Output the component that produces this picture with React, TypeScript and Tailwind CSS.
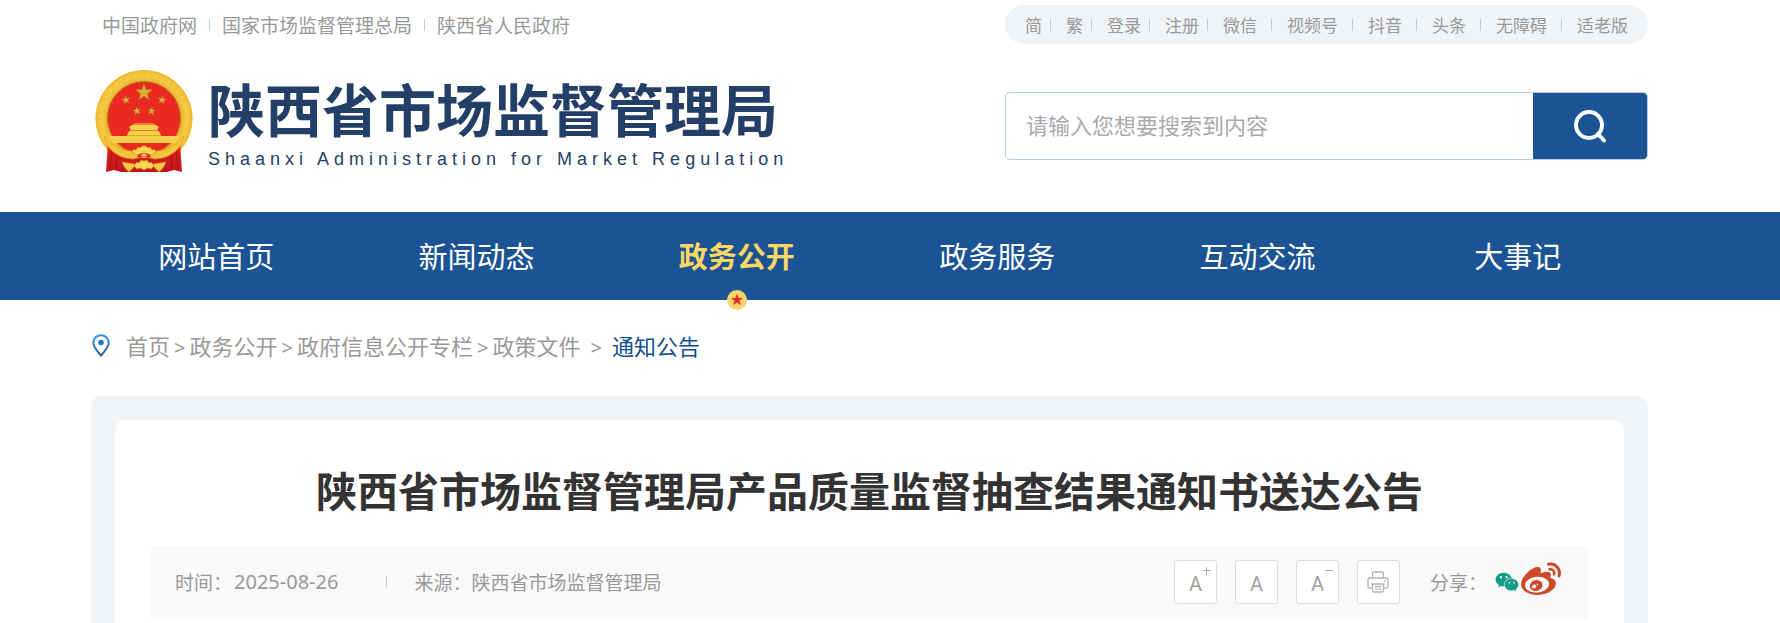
import { Fragment } from "react";
import { FaWeibo, FaWeixin } from "react-icons/fa";

const siteLinks = ["中国政府网", "国家市场监督管理总局", "陕西省人民政府"];

const compactTools = ["简", "繁", "登录", "注册"];
const wideTools = ["微信", "视频号", "抖音", "头条", "无障碍", "适老版"];

const navItems = [
  { label: "网站首页", active: false },
  { label: "新闻动态", active: false },
  { label: "政务公开", active: true },
  { label: "政务服务", active: false },
  { label: "互动交流", active: false },
  { label: "大事记", active: false },
];

const crumbs = ["首页", "政务公开", "政府信息公开专栏", "政策文件"];

const STAR = "0,-10 2.4,-3.2 9.5,-3.1 3.8,1.3 5.9,8.1 0,4 -5.9,8.1 -3.8,1.3 -9.5,-3.1 -2.4,-3.2";

function Emblem() {
  return (
    <svg viewBox="0 0 98 103" className="h-[103px] w-[98px] shrink-0" aria-hidden="true">
      <defs>
        <radialGradient id="gold" cx="50%" cy="50%" r="50%">
          <stop offset="0.74" stopColor="#dba028" />
          <stop offset="0.8" stopColor="#efc03a" />
          <stop offset="0.9" stopColor="#f7cd45" />
          <stop offset="1" stopColor="#eeb62c" />
        </radialGradient>
        <linearGradient id="drape" x1="0" x2="0" y1="0" y2="1">
          <stop offset="0" stopColor="#e0231e" />
          <stop offset="1" stopColor="#c3151a" />
        </linearGradient>
      </defs>
      <circle cx="49" cy="48.500" r="48.500" fill="url(#gold)" />
      <path d="M5 50a44 44 0 0 1 88-2" fill="none" stroke="#e5b035" strokeWidth="1" strokeDasharray="2 5" />
      <circle cx="49" cy="48" r="36.500" fill="#ea2a22" stroke="#b97a16" strokeWidth="0.800" />
      <path d="M13 73 30 84 49 88 68 84 85 73 87 102 79 100 72 102 26 102 19 100 11 102Z" fill="url(#drape)" />
      <path d="M17 80l-2 20M22 84l-1 16M81 80l2 20M76 84l1 16M29 90l-3 11M69 90l3 11" stroke="#a3121a" strokeWidth="1" />
      <path d="M9 66c6 9 15 14 28 15l12 1 12-1c13-1 22-6 28-15l-3 9c-7 10-17 14-27 14l-6-2h-8l-6 2c-10 0-20-4-27-14z" fill="#f4c33b" stroke="#cf9424" strokeWidth="0.500" />
      <path d="M37 82l2-3 2 1 2-3 2 1 2-2h4l2 2 2-1 2 3 2-1 2 3-5 3-2-1h-10l-2 1z" fill="#f9d552" stroke="#c98b1d" strokeWidth="0.500" />
      <path d="M42 87c1-3 4-4 7-4s6 1 7 4z" fill="#e0251f" />
      <path d="M46 86.500a3 3 0 0 1 6 0z" fill="#f8cc45" />
      <path d="M27 92l13 2-1 3-5 5c-3-3-6-6-7-10zM71 92l-13 2 1 3 5 5c3-3 6-6 7-10z" fill="#f6c93f" stroke="#c98b1d" strokeWidth="0.400" />
      <path d="M39 96l3-4 2 1 2-3 3 1 3-1 2 3 2-1 3 4-3 3-3-1-4 2-4-2-3 1z" fill="#f9d552" stroke="#c98b1d" strokeWidth="0.500" />
      <path d="M14 66h70l-4 7H18z" fill="#f8cf4a" />
      <path d="M32 66l2-5h30l2 5zM36 60l-2-3 3-2h24l3 2-2 3zM38 54.500l1-1h20l1 1z" fill="#f8cf4a" />
      <path d="M35 60.500h28M32 65.500h34" stroke="#dd9d28" strokeWidth="0.800" />
      <g fill="#d9ae38" stroke="#a86b14" strokeWidth="0.600">
        <polygon points={STAR} transform="translate(49 22.500) scale(.92)" />
        <polygon points={STAR} transform="translate(31 30) rotate(-12) scale(.44)" />
        <polygon points={STAR} transform="translate(67 30) rotate(12) scale(.44)" />
        <polygon points={STAR} transform="translate(42 41) rotate(-8) scale(.44)" />
        <polygon points={STAR} transform="translate(56.500 41) rotate(8) scale(.44)" />
      </g>
    </svg>
  );
}

function SearchIcon() {
  return (
    <svg viewBox="0 0 34 34" className="size-[34px]" fill="none" stroke="#fff" strokeWidth="4" strokeLinecap="round" aria-hidden="true">
      <circle cx="16" cy="16" r="13" />
      <path d="M25 25 31 31.500" />
    </svg>
  );
}

function PinIcon() {
  return (
    <svg viewBox="0 0 18 23" className="h-[23px] w-[18px]" aria-hidden="true">
      <defs>
        <linearGradient id="pin" x1="0" x2="0" y1="0" y2="1">
          <stop offset="0" stopColor="#3192e2" />
          <stop offset="1" stopColor="#2a5a98" />
        </linearGradient>
      </defs>
      <path d="M9 1.200C4.600 1.200 1.300 4.500 1.300 8.700 1.300 13 5.500 17.500 9 21.600 12.500 17.500 16.700 13 16.700 8.700 16.700 4.500 13.400 1.200 9 1.200Z" fill="none" stroke="url(#pin)" strokeWidth="2" strokeLinejoin="round" />
      <circle cx="9" cy="8.500" r="2.800" fill="#2579c8" />
    </svg>
  );
}

function PrinterIcon() {
  return (
    <svg viewBox="0 0 22 22" className="size-[22px]" fill="none" stroke="#b4b4b4" strokeWidth="1.300" strokeLinejoin="round" aria-hidden="true">
      <path d="M5.500 7V2.500q0-1.500 1.500-1.500h8q1.500 0 1.500 1.500V7" />
      <path d="M5.500 17H2.500Q1 17 1 15.500v-7Q1 7 2.500 7h17Q21 7 21 8.500v7q0 1.500-1.500 1.500h-3" />
      <path d="M4 13h14M5.500 13v6.500Q5.500 21 7 21h8q1.500 0 1.500-1.500V13M8 15.500h6M8 18h2M11.500 18H14M17 10h1.500" />
    </svg>
  );
}

function Divider({ className }: { className: string }) {
  return <span aria-hidden="true" className={`w-px shrink-0 bg-[#ccc] ${className}`} />;
}

function SizeButton({ label, mark }: { label: string; mark?: "plus" | "minus" }) {
  return (
    <button type="button" aria-label={label} className="relative flex h-11 w-[43px] items-center justify-center rounded-[3px] border border-[#ddd] bg-white pt-1 font-[Roboto,sans-serif] text-xl text-[#a0a0a0]">
      A
      {mark && (
        <svg viewBox="0 0 8 8" className="absolute top-[6px] right-[5px] size-2" stroke="#a8a8a8" strokeWidth="1" aria-hidden="true">
          <path d={mark === "plus" ? "M0 3.500h8M3.500 0v8" : "M0 3.500h8"} />
        </svg>
      )}
    </button>
  );
}

export default function App() {
  return (
    <div className="flex min-h-screen flex-col bg-white font-['Noto_Sans_CJK_SC',sans-serif] text-[#999]">
      <header className="pt-[5px] pr-[132px] pb-[39px] pl-[91px]">
        <div className="flex h-[39px] items-center justify-between">
          <nav aria-label="相关网站" className="flex items-center pl-[11px] text-[19px] leading-7">
            {siteLinks.map((label, i) => (
              <Fragment key={label}>
                {i > 0 && <Divider className="mx-3 h-3" />}
                <a href="#">{label}</a>
              </Fragment>
            ))}
          </nav>
          <nav aria-label="工具" className="flex h-full items-center rounded-full bg-[#f0f4f7] px-5 text-[17px] leading-6">
            {compactTools.map((label) => (
              <Fragment key={label}>
                <a href="#">{label}</a>
                <Divider className="mr-[15px] ml-2 h-3" />
              </Fragment>
            ))}
            {wideTools.map((label, i) => (
              <Fragment key={label}>
                {i > 0 && <Divider className="mr-[15px] ml-[14px] h-3" />}
                <a href="#">{label}</a>
              </Fragment>
            ))}
          </nav>
        </div>

        <div className="mt-[26px] flex items-center justify-between gap-8">
          <a href="#" className="flex items-start gap-[15px] pl-1 text-[#233f68]">
            <Emblem />
            <span className="flex flex-col gap-1 pt-[3px]">
              <span className="text-[57px] leading-[68px] font-bold">陕西省市场监督管理局</span>
              <span className="font-['Liberation_Sans',sans-serif] text-lg leading-7 tracking-[5px]">
                Shaanxi Administration for Market Regulation
              </span>
            </span>
          </a>
          <form role="search" className="mt-[9px] flex h-[68px] w-full max-w-[643px] overflow-hidden rounded-[5px] border border-[#b5cbde]">
            <input
              type="text"
              aria-label="搜索"
              placeholder="请输入您想要搜索到内容"
              className="min-w-0 flex-1 px-5 pb-1 text-[22px] outline-none placeholder:text-[#aaa]"
            />
            <button type="button" aria-label="搜索" className="flex w-[114px] items-center justify-center bg-[#1c5394]">
              <SearchIcon />
            </button>
          </form>
        </div>
      </header>

      <nav aria-label="主导航" className="bg-[#1c5394] pr-[132px] pl-[86px]">
        <ul className="grid grid-cols-6 text-center text-[29px] leading-[86px] text-white">
          {navItems.map(({ label, active }) => (
            <li key={label} className="relative pb-[2px]">
              <a href="#" className={active ? "font-bold text-[#fdd764]" : ""}>{label}</a>
              {active && (
                <svg viewBox="-10 -10 20 20" className="absolute -bottom-[10px] left-1/2 size-5 -translate-x-1/2" aria-hidden="true">
                  <circle r="10" fill="#fdd568" />
                  <polygon points={STAR} transform="scale(.65)" fill="#ee2a24" />
                </svg>
              )}
            </li>
          ))}
        </ul>
      </nav>

      <main className="flex flex-1 flex-col pr-[132px] pl-[91px]">
        <nav aria-label="当前位置" className="flex h-24 items-center pb-[5px] text-[22px] leading-8">
          <span className="pr-4 pl-px"><PinIcon /></span>
          <span className="flex items-baseline">
            {crumbs.map((label, i) => (
              <Fragment key={label}>
                {i > 0 && <span className="px-[4px] font-['Noto_Sans',sans-serif] text-xl">&gt;</span>}
                <a href="#">{label}</a>
              </Fragment>
            ))}
            <span className="px-[10px] font-['Noto_Sans',sans-serif] text-xl">&gt;</span>
            <a href="#" className="text-[#134f8e]">通知公告</a>
          </span>
        </nav>

        <section className="flex flex-1 flex-col rounded-t-[10px] bg-[#f1f5f8] px-6 pt-6">
          <article className="flex-1 rounded-t-[10px] bg-white px-9 pt-[39px]">
            <h1 className="text-center text-[41px] leading-[60px] font-bold text-[#333]">
              陕西省市场监督管理局产品质量监督抽查结果通知书送达公告
            </h1>
            <div className="mt-[27px] flex h-[73px] items-center justify-between bg-[#f9f9f9] pr-[27px] pb-[2px] pl-6 text-[19px] leading-7">
              <div className="flex items-center">
                <span>时间：</span>
                <time className="ml-[2px] font-['Noto_Sans',sans-serif] text-xl leading-7">2025-08-26</time>
                <Divider className="mr-[27px] ml-12 h-3" />
                <span>来源：陕西省市场监督管理局</span>
              </div>
              <div className="flex items-center">
                <div className="flex gap-[18px]">
                  <SizeButton label="放大字号" mark="plus" />
                  <SizeButton label="默认字号" />
                  <SizeButton label="缩小字号" mark="minus" />
                  <button type="button" aria-label="打印" className="flex h-11 w-[43px] items-center justify-center rounded-[3px] border border-[#ddd] bg-white">
                    <PrinterIcon />
                  </button>
                </div>
                <span className="ml-[30px]">分享：</span>
                <a href="#" aria-label="微信" className="ml-2"><FaWeixin className="size-6 text-[#149c88]" /></a>
                <a href="#" aria-label="微博" className="ml-[2px] pb-1"><FaWeibo className="size-10 text-[#cb492b]" /></a>
              </div>
            </div>
          </article>
        </section>
      </main>
    </div>
  );
}
